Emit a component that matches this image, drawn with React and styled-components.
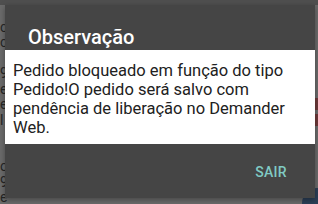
import styled, { createGlobalStyle } from "styled-components";

const Global = createGlobalStyle`
  html, body {
    margin: 0;
    padding: 0;
  }
  body {
    font-family: Roboto, "Liberation Sans", sans-serif;
  }
`;

const Screen = styled.div`
  position: relative;
  width: 318px;
  height: 204px;
  overflow: hidden;
  background: #6b6b6b;
  display: flex;
  flex-direction: column;
`;

const ToolbarStrip = styled.div`
  height: 5px;
  background: #4f4f4f;
  flex-shrink: 0;
`;

const List = styled.div`
  display: flex;
  flex-direction: column;
  padding-top: 14px;
`;

const Row = styled.div`
  height: 15.5px;
  display: flex;
  justify-content: space-between;
  align-items: center;
  font-size: 14px;
  color: #262626;
  white-space: nowrap;
`;

const Mark = styled.span`
  width: 4px;
  height: 12px;
  background: ${(p) => p.color || "transparent"};
`;

const BottomRow = styled.div`
  margin-top: auto;
  height: 8px;
  display: flex;
  font-size: 14px;
  color: #262626;
  white-space: nowrap;
  line-height: 16px;
`;

const Cell = styled.span`
  width: ${(p) => p.width || "auto"};
`;

const Fab = styled.div`
  position: absolute;
  right: -14px;
  bottom: -14px;
  width: 30px;
  height: 30px;
  border-radius: 50%;
  background: #2c3f57;
`;

const Dialog = styled.div`
  position: absolute;
  left: 5px;
  top: 5px;
  width: 310px;
  height: 193px;
  background: #454545;
  display: flex;
  flex-direction: column;
  box-shadow: 0 2px 6px rgba(0, 0, 0, 0.35);
`;

const Title = styled.div`
  height: 45px;
  box-sizing: border-box;
  padding: 20px 0 0 23px;
  font-size: 20px;
  line-height: 24px;
  font-weight: 500;
  color: #ffffff;
`;

const Body = styled.div`
  height: 94px;
  box-sizing: border-box;
  padding: 11px 16px 0 8px;
  background: #ffffff;
  font-size: 16.5px;
  line-height: 19px;
  color: #212121;
`;

const Footer = styled.div`
  flex: 1;
  display: flex;
  justify-content: flex-end;
  align-items: flex-start;
  padding: 20px 28px 0 0;
`;

const TextButton = styled.button`
  border: none;
  background: none;
  padding: 0;
  margin: 0;
  font-family: inherit;
  font-size: 14px;
  line-height: 16px;
  font-weight: 500;
  letter-spacing: 0.3px;
  color: #80cbc4;
  text-transform: uppercase;
`;

const rows = [
  { left: "c" },
  { left: "c" },
  { left: "" },
  { left: "9" },
  { left: "e" },
  { left: "e", mark: "#6e3a3a" },
  { left: "l", mark: "#6e3a3a" },
  { left: "" },
  { left: "" },
  { left: "o" },
  { left: "9" },
  { left: "e" },
];

export default function App() {
  return (
    <>
      <Global />
      <Screen>
        <ToolbarStrip />
        <List>
          {rows.map((r, i) => (
            <Row key={i}>
              <span>{r.left}</span>
              <Mark color={r.mark} />
            </Row>
          ))}
        </List>
        <BottomRow>
          <Cell width="170px">ele: R$0,00</Cell>
          <Cell>Valor Produtos: R$579,0</Cell>
        </BottomRow>
        <Fab />
        <Dialog>
          <Title>Observação</Title>
          <Body>
            Pedido bloqueado em função do tipo Pedido!O pedido será salvo com
            pendência de liberação no Demander Web.
          </Body>
          <Footer>
            <TextButton>Sair</TextButton>
          </Footer>
        </Dialog>
      </Screen>
    </>
  );
}
